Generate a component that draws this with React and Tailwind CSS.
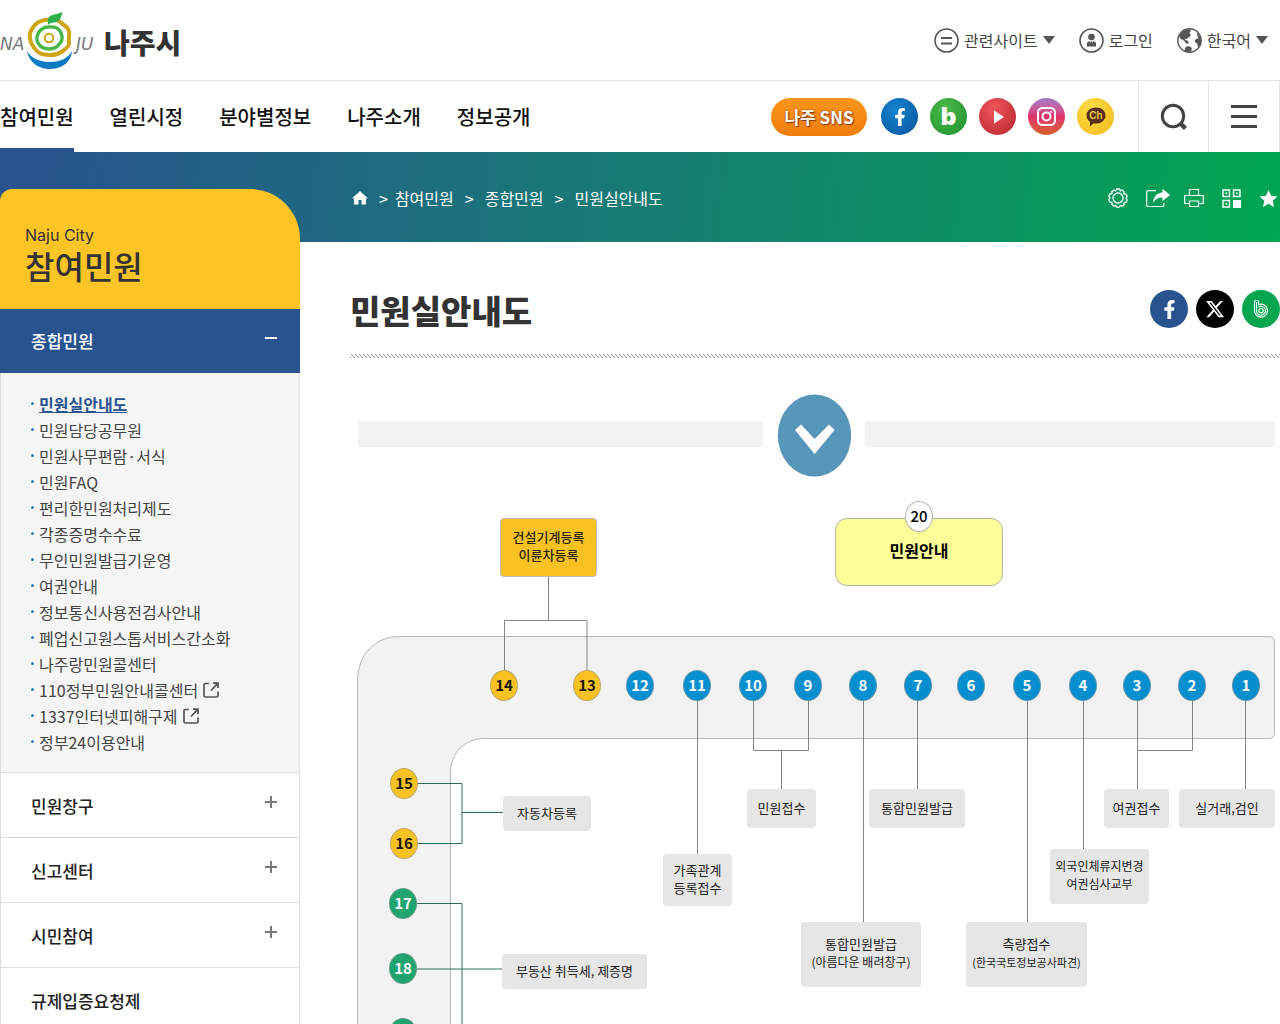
import clsx from 'clsx';
import { FaFacebookF } from 'react-icons/fa';
import { FaXTwitter } from 'react-icons/fa6';

const NAV = ['참여민원', '열린시정', '분야별정보', '나주소개', '정보공개'];

const SUB_MENU = [
  { label: '민원실안내도', active: true },
  { label: '민원담당공무원' },
  { label: '민원사무편람·서식' },
  { label: '민원FAQ' },
  { label: '편리한민원처리제도' },
  { label: '각종증명수수료' },
  { label: '무인민원발급기운영' },
  { label: '여권안내' },
  { label: '정보통신사용전검사안내' },
  { label: '폐업신고원스톱서비스간소화' },
  { label: '나주랑민원콜센터' },
  { label: '110정부민원안내콜센터', external: true },
  { label: '1337인터넷피해구제', external: true },
  { label: '정부24이용안내' },
];

const CATEGORIES = [
  { label: '민원창구', expandable: true },
  { label: '신고센터', expandable: true },
  { label: '시민참여', expandable: true },
  { label: '규제입증요청제' },
];

// counter numbers, x / y are the centre of each marker on the map
const COUNTERS = [
  { n: 14, x: 154, y: 305, tone: 'yellow' },
  { n: 13, x: 237, y: 305, tone: 'yellow' },
  { n: 12, x: 290, y: 305, tone: 'blue' },
  { n: 11, x: 347, y: 305, tone: 'blue' },
  { n: 10, x: 403, y: 305, tone: 'blue' },
  { n: 9, x: 458, y: 305, tone: 'blue' },
  { n: 8, x: 513, y: 305, tone: 'blue' },
  { n: 7, x: 568, y: 305, tone: 'blue' },
  { n: 6, x: 621, y: 305, tone: 'blue' },
  { n: 5, x: 677, y: 305, tone: 'blue' },
  { n: 4, x: 733, y: 305, tone: 'blue' },
  { n: 3, x: 787, y: 305, tone: 'blue' },
  { n: 2, x: 842, y: 305, tone: 'blue' },
  { n: 1, x: 896, y: 305, tone: 'blue' },
  { n: 15, x: 54, y: 403, tone: 'yellow' },
  { n: 16, x: 54, y: 463, tone: 'yellow' },
  { n: 17, x: 53, y: 523, tone: 'green' },
  { n: 18, x: 53, y: 588, tone: 'green' },
  { n: 19, x: 53, y: 653, tone: 'green' },
];

const TONES = {
  yellow: 'bg-[#f8c222] text-[#1c1508]',
  blue: 'bg-[#068fcf] text-white',
  green: 'bg-[#1ea470] text-white',
};

const DESKS = [
  { x: 153, y: 416, w: 88, h: 35, lines: ['자동차등록'] },
  { x: 152, y: 574, w: 145, h: 35, lines: ['부동산 취득세, 제증명'] },
  { x: 313, y: 474, w: 69, h: 52, lines: ['가족관계', '등록접수'] },
  { x: 397, y: 409, w: 69, h: 39, lines: ['민원접수'] },
  { x: 519, y: 409, w: 96, h: 39, lines: ['통합민원발급'] },
  { x: 451, y: 542, w: 120, h: 65, lines: ['통합민원발급'], note: '(아름다운 배려창구)' },
  { x: 616, y: 542, w: 121, h: 65, lines: ['측량접수'], note: '(한국국토정보공사파견)', tight: true },
  { x: 700, y: 469, w: 99, h: 55, lines: ['외국인체류지변경', '여권심사교부'], small: true },
  { x: 754, y: 409, w: 65, h: 39, lines: ['여권접수'] },
  { x: 829, y: 409, w: 96, h: 39, lines: ['실거래,검인'] },
];

function Logo() {
  return (
    <a href="#" className="flex items-center gap-1.5 pt-1" aria-label="나주시">
      <svg width="98" height="60" viewBox="0 2 98 60" fill="none" aria-hidden="true">
        <text x="0" y="40" fontFamily="DejaVu Sans" fontStyle="italic" fontSize="17" fill="#77787b">NA</text>
        <text x="76" y="40" fontFamily="DejaVu Sans" fontStyle="italic" fontSize="17" fill="#77787b">JU</text>
        <path d="M27 41c4 7 12 11 23 11s18-4 22-11c-1 11-10 18-22 18s-21-7-23-18Z" fill="#0b7cc1" />
        <path d="M49 9.500c5-1 10 1 13 4s6 3 7 8-1 8 0 11-4 7-7 9-7 4-13 3.500-10-1-13-5-5-5-6-11 1-9 4-13 8-6 15-6.500Z" stroke="#cfa517" strokeWidth="4" />
        <path d="M49 17c5-.5 9 1 11 4s3 8 1 11-5 7-11 7-10-2-12-6-1-8 1-11 5-5 10-5Z" stroke="#48b648" strokeWidth="3.400" />
        <circle cx="49" cy="28" r="4.300" stroke="#cfa517" strokeWidth="2" />
        <path d="M48.500 15c-2-6 0-9 4-10 4-1.500 7-1 10-3.500-1 5-2 9-6 10.500-3 1-6 0-8 3Z" fill="#2fae4c" />
      </svg>
      <span className="text-[28px] leading-10 font-black text-[#333]">나주시</span>
    </a>
  );
}

function Caret() {
  return (
    <svg width="12" height="8" viewBox="0 0 12 8" aria-hidden="true">
      <path d="M0 0h12L6 8Z" fill="#555" />
    </svg>
  );
}

function TopBar() {
  return (
    <div className="flex h-20 items-center justify-between pr-3">
      <Logo />
      <div className="flex items-center gap-6 text-base leading-6 text-[#444]">
        <button type="button" className="flex items-center gap-[5px]">
          <svg width="25" height="25" viewBox="0 0 25 25" fill="none" stroke="#555" strokeWidth="1.600" aria-hidden="true">
            <circle cx="12.500" cy="12.500" r="11.500" />
            <path d="M7 10h11M7 15.500h11" strokeWidth="2" />
          </svg>
          관련사이트
          <Caret />
        </button>
        <a href="#" className="flex items-center gap-[5px]">
          <svg width="25" height="25" viewBox="0 0 25 25" fill="none" aria-hidden="true">
            <circle cx="12.500" cy="12.500" r="11.500" stroke="#555" strokeWidth="1.600" />
            <circle cx="12.500" cy="9" r="3.300" fill="#555" />
            <path d="M8 18.500v-3c0-1.500 1.500-2.300 3-2.300l1.500 4 1.500-4c1.500 0 3 .8 3 2.300v3Z" fill="#555" />
            <path d="M11.900 13.300h1.200l.4 3-1 1.600-1-1.600Z" fill="#555" />
          </svg>
          로그인
        </a>
        <button type="button" className="flex items-center gap-[5px]">
          <svg width="25" height="25" viewBox="0 0 25 25" fill="none" aria-hidden="true">
            <circle cx="12.500" cy="12.500" r="11.700" stroke="#555" strokeWidth="1.400" />
            <path d="M3 6C5 3 9 1 14 1.500c0 2-1 3-2 3.500 2 .5 2 2 1 3.500-1 1-2 1-3 2.500-1-.5-2 0-2 1 2 0 3 1 4 2.500l-2 1.500C8 15 8 12.500 5 11.500 3 11 1.500 9 3 6Z" fill="#555" />
            <path d="M20 5c2.500 2 4 4.500 4 8 0 2-1 4-2.500 6-1-.5-1.500-2-1-3.500-2 0-3-2-2.500-3.500 1-1.500 2.500-1.500 3.500-1.500-.5-2-1.500-3-1.500-5.500Z" fill="#555" />
            <path d="M8 20c1-2 4-2.500 6-1l1 2.500-2 2.500c-2 .4-4 0-5.500-1Z" fill="#555" />
          </svg>
          한국어
          <Caret />
        </button>
      </div>
    </div>
  );
}

const BADGE = 'flex size-[37px] items-center justify-center rounded-full text-white';

function SnsLinks() {
  return (
    <div className="flex items-center gap-3">
      <a href="#" className="mr-0.5 flex h-[38px] w-24 items-center justify-center rounded-full bg-linear-to-b from-[#f9961b] via-[#f58a14] to-[#f07d0a] text-[17px] leading-6 font-bold text-white [text-shadow:0_0_2px_#8a3a10,1px_1px_1px_#8a3a10]">
        나주 SNS
      </a>
      <a href="#" aria-label="페이스북" className={clsx(BADGE, 'bg-radial-[at_40%_30%] from-[#1583cf] to-[#06549a]')}>
        <FaFacebookF size={18} />
      </a>
      <a href="#" aria-label="블로그" className={clsx(BADGE, 'bg-radial-[at_40%_30%] from-[#4dba48] to-[#1c8f2e] font-["Inter"] text-2xl leading-6 font-black')}>
        b
      </a>
      <a href="#" aria-label="유튜브" className={clsx(BADGE, 'bg-radial-[at_40%_30%] from-[#f2555a] to-[#b3262f]')}>
        <svg width="12" height="14" viewBox="0 0 12 14" aria-hidden="true"><path d="M2 0.500 12 7 2 13.500Z" fill="#fff" /></svg>
      </a>
      <a href="#" aria-label="인스타그램" className={clsx(BADGE, 'bg-linear-to-b from-[#a17bd0] via-[#e0306e] to-[#d9601f]')}>
        <svg width="19" height="19" viewBox="0 0 19 19" fill="none" stroke="#fff" strokeWidth="2" aria-hidden="true">
          <rect x="1" y="1" width="17" height="17" rx="4.500" />
          <circle cx="9.500" cy="9.500" r="4" />
          <circle cx="14" cy="5" r="0.600" strokeWidth="1" />
        </svg>
      </a>
      <a href="#" aria-label="카카오채널" className={clsx(BADGE, 'bg-radial-[at_40%_30%] from-[#ffdf45] to-[#efb81d]')}>
        <svg width="20" height="20" viewBox="0 0 20 20" aria-hidden="true">
          <path d="M10 0.500c5.500 0 9.500 3.500 9.500 8s-4 8-9.500 8c-1 0-2 0-2.500-.2L4 19.500v-4.700C1.500 13.400.5 11 .5 8.500c0-4.500 4-8 9.500-8Z" fill="#56301c" />
          <text x="10" y="12" textAnchor="middle" fontFamily="Inter" fontWeight="600" fontSize="10" fill="#f7cf3c">Ch</text>
        </svg>
      </a>
    </div>
  );
}

function MainNav() {
  return (
    <div className="flex h-[72px] items-stretch justify-between border-t border-[#e5e5e5]">
      <nav className="flex gap-9">
        {NAV.map((label, i) => (
          <a
            key={label}
            href="#"
            className={clsx(
              'flex items-center border-b-4 pt-1 text-xl leading-7 font-medium text-[#111]',
              i === 0 ? 'border-[#28538f]' : 'border-transparent',
            )}
          >
            {label}
          </a>
        ))}
      </nav>
      <div className="flex items-stretch gap-6">
        <SnsLinks />
        <div className="flex border-x border-[#e5e5e5]">
          <button type="button" aria-label="검색" className="flex w-[70px] items-center justify-center border-r border-[#e5e5e5]">
            <svg width="28" height="28" viewBox="0 0 28 28" fill="none" stroke="#444" aria-hidden="true">
              <circle cx="13" cy="13" r="10.700" strokeWidth="3" />
              <path d="m20.500 20.500 5 5" strokeWidth="4.500" />
            </svg>
          </button>
          <button type="button" aria-label="전체메뉴" className="flex w-[70px] items-center justify-center">
            <svg width="26" height="24" viewBox="0 0 26 24" aria-hidden="true">
              <path d="M0 0h26v3H0ZM0 10h26v3H0ZM0 20h26v3H0Z" fill="#444" />
            </svg>
          </button>
        </div>
      </div>
    </div>
  );
}

function PageTools() {
  return (
    <div className="flex h-6 items-center gap-[18px] pr-0.5 text-white">
      <button type="button" aria-label="설정">
        <svg width="20" height="20" viewBox="0 0 20 20" fill="none" stroke="currentColor" strokeWidth="1.300" aria-hidden="true">
          <circle cx="10" cy="10" r="5" />
          <path d="m8.500 1 3 0 .8 1.800 1.800-.7 2 1.700-.2 1.900 2 .4 1.300 2.700-1.300 1.400 1.300 1.600-1.200 2.600-2 .3.200 1.900-2.200 1.600-1.700-.7-1 1.600H8.500l-.9-1.700-1.800.7-2-1.700.2-1.900-2-.4L.8 11.700 2 10 .8 8.300 2 5.800l2-.3-.1-1.900L6 2.100l1.700.7Z" strokeLinejoin="round" />
        </svg>
      </button>
      <button type="button" aria-label="공유">
        <svg width="24" height="20" viewBox="0 0 24 20" aria-hidden="true">
          <path d="M10 2.700H2q-1.300 0-1.300 1.300v13.200q0 1.300 1.300 1.300h14.500q1.300 0 1.300-1.300V15" fill="none" stroke="currentColor" strokeWidth="1.200" />
          <path d="M16.500 0.800 24 7l-7.500 6v-3.500c-4.500 0-7 1.800-9.500 5.500C7.500 9 11 5 16.500 4.300Z" fill="currentColor" />
        </svg>
      </button>
      <button type="button" aria-label="인쇄" className="-mx-1">
        <svg width="20" height="20" viewBox="0 0 20 20" fill="none" stroke="currentColor" strokeWidth="1.200" aria-hidden="true">
          <path d="M5.500 7V1.500h9V7M5 15.500H.7V7.500h18.600v8H15M5.500 13h9v5.500h-9Z" />
        </svg>
      </button>
      <button type="button" aria-label="QR코드" className="ml-1">
        <svg width="19" height="19" viewBox="0 0 19 19" aria-hidden="true">
          <path d="M1 1h6.500v6.500H1ZM11.500 1H18v6.500h-6.500ZM1 11.500h6.500V18H1Z" fill="none" stroke="currentColor" strokeWidth="1.400" />
          <path d="M3.500 3.500h1.500V5H3.500ZM14 3.500h1.500V5H14ZM3.500 14h1.500v1.500H3.500ZM11 11h8v8h-8Z" fill="currentColor" />
        </svg>
      </button>
      <button type="button" aria-label="즐겨찾기">
        <svg width="19" height="19" viewBox="0 0 19 19" aria-hidden="true">
          <path d="m9.500 1 2.600 5.800 6.400.7-4.800 4.200 1.400 6.300-5.600-3.200L3.900 18l1.400-6.300L.5 7.500l6.400-.7Z" fill="currentColor" />
        </svg>
      </button>
    </div>
  );
}

function Hero() {
  return (
    <div className="flex h-[90px] items-start justify-between bg-linear-[97deg] from-[#29528f] via-[#177c74] to-[#00a651] pt-[34px] pl-[352px]">
      <nav aria-label="현재 위치" className="flex items-center gap-[11px] text-base leading-6 text-white">
        <span className="flex items-center gap-[11px] -mr-1">
          <a href="#" aria-label="홈">
            <svg width="16" height="14" viewBox="0 0 16 14" aria-hidden="true">
              <path d="M8 0 16 7.500h-2V13.500H9.500V9h-3v4.500H2V7.500H0Z" fill="currentColor" />
            </svg>
          </a>
          <span>&gt;</span>
        </span>
        <a href="#">참여민원</a>
        <span>&gt;</span>
        <a href="#">종합민원</a>
        <span>&gt;</span>
        <a href="#">민원실안내도</a>
      </nav>
      <PageTools />
    </div>
  );
}

function ExternalIcon() {
  return (
    <svg width="16" height="16" viewBox="0 0 16 16" fill="none" stroke="#555" strokeWidth="1.700" aria-hidden="true">
      <path d="M6 1.500H2.500q-1.500 0-1.500 1.500v10.500q0 1.500 1.500 1.500h11q1.500 0 1.500-1.500V9.500M10 1.200h5V6M15 1.200 8 8.500" />
    </svg>
  );
}

function Sidebar() {
  return (
    <aside className="relative -mt-[53px] w-[300px] shrink-0">
      <div className="h-[120px] rounded-tl-[12px] rounded-tr-[50px] bg-[#fcc425] pt-9 pl-[25px] text-[#333]">
        <p className="font-['Inter'] text-base leading-5">Naju City</p>
        <h2 className="text-[32px] leading-10 font-medium">참여민원</h2>
      </div>
      <button type="button" aria-expanded="true" className="flex h-16 w-full items-center justify-between bg-[#28538f] pr-[23px] pl-[31px] text-[17px] leading-6 font-medium text-white">
        종합민원
        <svg width="12" height="12" viewBox="0 0 12 12" aria-hidden="true"><path d="M0 2h12v2H0Z" fill="#fff" /></svg>
      </button>
      <ul className="border-x border-[#dcdfe1] bg-[#f5f5f5] pt-[18px] pb-[17px] pl-[30px]">
        {SUB_MENU.map(({ label, active, external }) => (
          <li key={label} className="flex h-[26px] items-center gap-[5px]">
            <span className="mb-0.5 size-[3px] rounded-full bg-[#2e83bd]" />
            <a
              href="#"
              className={clsx(
                'flex items-center gap-[5px] text-base leading-[26px]',
                active ? 'font-bold text-[#28538f] underline' : 'text-[#444]',
              )}
            >
              {label}
              {external && <ExternalIcon />}
            </a>
          </li>
        ))}
      </ul>
      {CATEGORIES.map(({ label, expandable }) => (
        <button
          key={label}
          type="button"
          className="flex h-[65px] w-full items-center justify-between border-x border-t border-[#dcdfe1] bg-white pt-0.5 pr-[22px] pl-[30px] text-[17px] leading-6 font-medium text-[#222]"
        >
          {label}
          {expandable && (
            <svg width="12" height="20" viewBox="0 0 12 20" aria-hidden="true">
              <path d="M0 5h12v2H0ZM5 0h2v12H5Z" fill="#777" />
            </svg>
          )}
        </button>
      ))}
    </aside>
  );
}

function FloorMap() {
  return (
    <div className="relative h-[700px] w-[930px]">
      <svg width="930" height="700" viewBox="0 0 930 700" fill="none" className="absolute inset-0" aria-hidden="true">
        <rect x="8" y="41" width="405" height="26" rx="2" fill="#f2f2f2" />
        <rect x="515" y="41" width="410" height="26" rx="2" fill="#f2f2f2" />
        <ellipse cx="464.500" cy="55.500" rx="36.700" ry="41" fill="#5795b9" />
        <path d="m445 50 6-5.500 13.600 14.500L479 44.500l5.500 5.500-19.900 24Z" fill="#fff" />

        <path d="M7.500 700V302c0-28 18-45.500 42-45.500h869q6 0 6 6v90q0 6-6 6H135c-20 0-34.500 14-34.500 34V700" fill="#f2f2f2" stroke="#b5b5b5" />

        <g stroke="#858585">
          <path d="M198.500 196v44.500M154.500 290v-49.500h82.500V290" />
          <path d="M347.500 320v154M403.500 320v50.500h55V320M431.500 370.500V410" />
          <path d="M513.500 320v222M567.500 320v90M677.500 320v222M733.500 320v150" />
          <path d="M787.500 320v90M842.500 320v50.500h-55M895.500 320v90" />
        </g>
        <g stroke="#2c705b">
          <path d="M67 403.500h45v60H67M112 432.500h41" />
          <path d="M67 523.500h45V700M67 589h86" />
        </g>
      </svg>

      <div className="absolute top-[138px] left-[150px] flex h-[59px] w-[97px] items-center justify-center rounded border border-[#bbb] bg-[#f8c222] pb-1 text-center text-[13px] leading-[18px] font-medium text-[#2a1f0a]">
        건설기계등록<br />이륜차등록
      </div>
      <div className="absolute top-[138px] left-[485px] flex h-[68px] w-[168px] items-center justify-center rounded-xl border border-[#b5b5a5] bg-[#fdfe9a] pb-1 text-base leading-6 font-bold text-black">
        민원안내
      </div>
      <div className="absolute top-[121px] left-[555px] flex h-[31px] w-[28px] items-center justify-center rounded-[50%] border border-[#b5b5b5] bg-white pb-0.5 text-[15px] leading-5 font-medium text-black">
        20
      </div>

      {COUNTERS.map(({ n, x, y, tone }) => (
        <div
          key={n}
          style={{ left: x, top: y }}
          className={clsx(
            'absolute -mt-[15px] -ml-[14px] flex h-[31px] w-[28px] items-center justify-center rounded-[50%] border border-[#999]/60 pb-0.5 text-[15px] leading-5 font-bold',
            TONES[tone],
          )}
        >
          {n}
        </div>
      ))}

      {DESKS.map(({ x, y, w, h, lines, note, tight, small }) => (
        <div
          key={x}
          style={{ left: x, top: y, width: w, height: h }}
          className={clsx(
            'absolute flex flex-col items-center justify-center rounded bg-[#e6e6e6] whitespace-nowrap text-[#222]',
            small ? 'text-xs leading-[18px]' : 'text-[13px] leading-[18px]',
            note || small ? 'pb-1' : 'pb-0.5',
          )}
        >
          {lines.map((line) => <span key={line}>{line}</span>)}
          {note && (
            <span className={tight ? 'text-[11px] leading-[18px]' : 'text-xs leading-[18px]'}>{note}</span>
          )}
        </div>
      ))}
    </div>
  );
}

const SHARE = 'flex size-[38px] items-center justify-center rounded-full text-white';

function Content() {
  return (
    <main className="min-w-0 flex-1 pl-[50px]">
      <div className="flex h-[112px] items-start justify-between pt-12">
        <h1 className="text-[33px] leading-10 font-black text-[#333]">민원실안내도</h1>
        <div className="flex gap-2">
          <a href="#" aria-label="페이스북 공유" className={clsx(SHARE, 'bg-[#28538f]')}><FaFacebookF size={19} /></a>
          <a href="#" aria-label="X 공유" className={clsx(SHARE, 'bg-black')}><FaXTwitter size={20} /></a>
          <a href="#" aria-label="밴드 공유" className={clsx(SHARE, 'bg-[#06a650]')}>
            <svg width="16" height="18" viewBox="0 0 16 18" fill="none" stroke="#fff" aria-hidden="true">
              <path d="M1.500 2v8.500a6.500 6.500 0 1 0 6.500-6.300L5.500 4.800V2a2 2 0 0 0-4 0Z" strokeWidth="1.200" />
              <path d="M3.500 2v8.500a4.500 4.500 0 1 0 4.500-4.300l-2.500.8" strokeWidth="1.100" />
              <circle cx="8" cy="10.700" r="2.200" strokeWidth="1.200" />
            </svg>
          </a>
        </div>
      </div>
      <div className="h-1 bg-[repeating-linear-gradient(45deg,#999_0_1px,#fff_1px_2.83px)]" />
      <div className="pt-[22px]">
        <FloorMap />
      </div>
    </main>
  );
}

export default function App() {
  return (
    <div className="min-h-screen overflow-x-hidden bg-white font-['Noto_Sans_CJK_KR',sans-serif]">
      <header>
        <TopBar />
        <MainNav />
      </header>
      <Hero />
      <div className="flex items-start">
        <Sidebar />
        <Content />
      </div>
    </div>
  );
}
